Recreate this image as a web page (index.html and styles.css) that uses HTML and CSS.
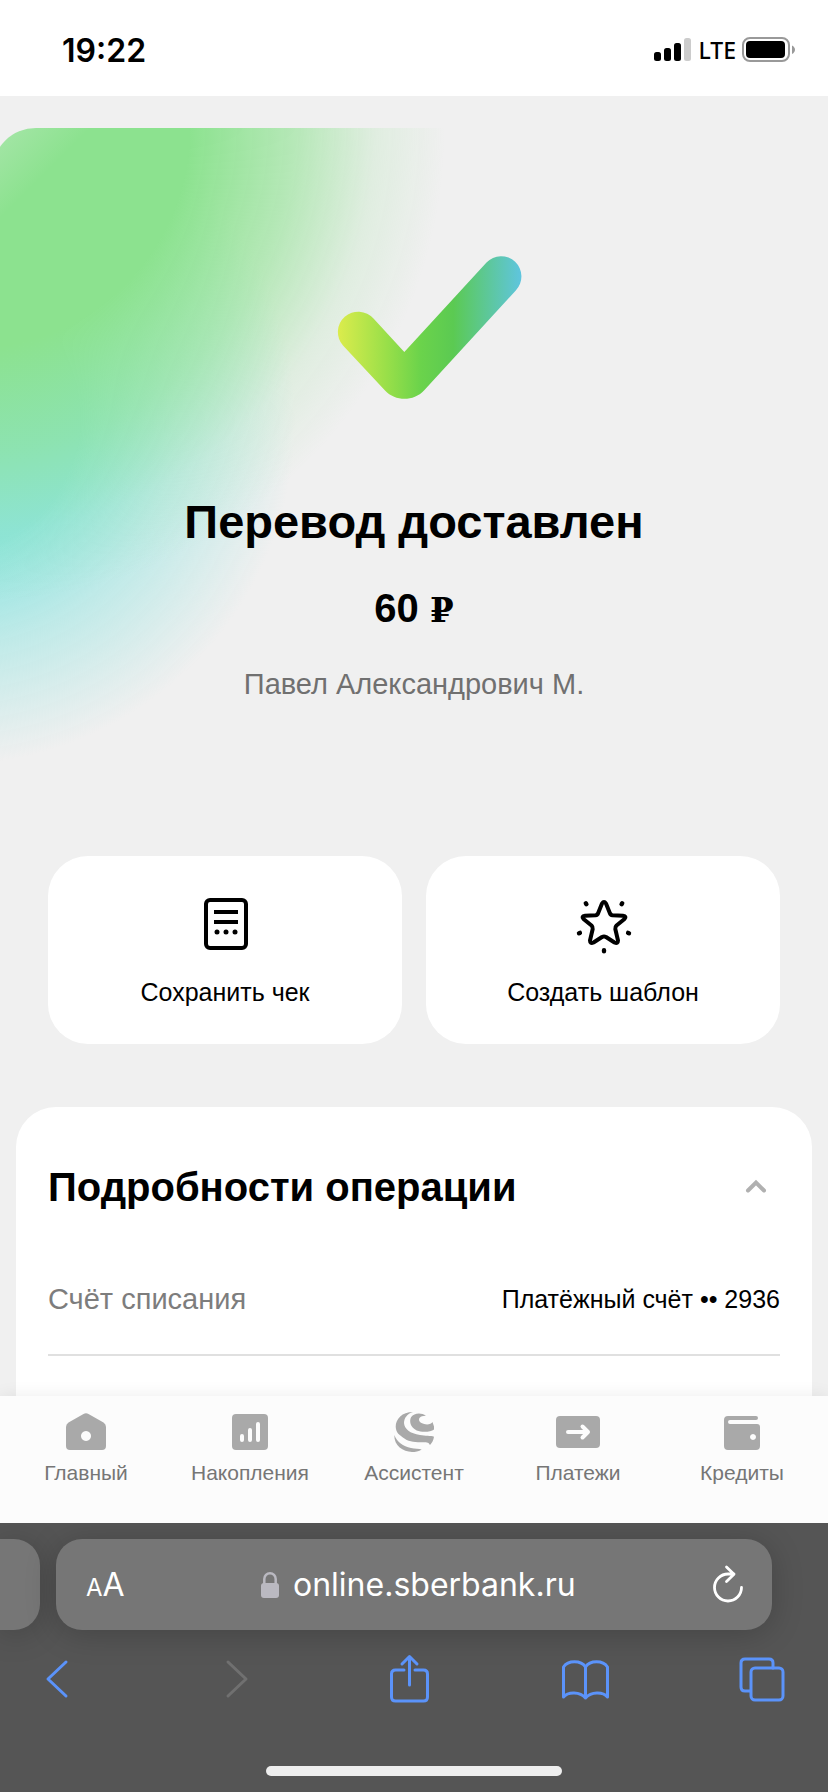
FILE: index.html
```html
<!DOCTYPE html>
<html lang="ru">
<head>
<meta charset="utf-8">
<meta name="viewport" content="width=device-width, initial-scale=1">
<title>Перевод доставлен</title>
<link rel="stylesheet" href="styles.css">
</head>
<body>
<header class="status">
  <time class="status-time">19:22</time>
  <div class="status-right">
    <svg width="38" height="24" viewBox="0 0 38 24" aria-hidden="true">
      <rect x="0" y="14" width="7" height="9" rx="2.5"/>
      <rect x="10" y="10" width="7" height="13" rx="2.5"/>
      <rect x="20" y="5" width="7" height="18" rx="2.5"/>
      <rect x="30" y="0" width="7" height="23" rx="2.5" fill="#ccc"/>
    </svg>
    <span class="status-net">LTE</span>
    <svg width="53" height="26" viewBox="0 0 53 26" aria-hidden="true">
      <rect x="1" y="1" width="46" height="23" rx="7" fill="none" stroke="#999" stroke-width="2"/>
      <rect x="4" y="4" width="39" height="17" rx="4"/>
      <path d="M50 8.500c4 2 4 6.500 0 8.500z" fill="#999"/>
    </svg>
  </div>
</header>

<main class="page">
  <section class="hero">
    <svg class="hero-check" width="216" height="144" viewBox="306 256 216 144" aria-hidden="true">
      <defs>
        <linearGradient id="check" gradientUnits="userSpaceOnUse" x1="338" y1="0" x2="521" y2="0">
          <stop offset="0" stop-color="#dbec4c"/>
          <stop offset=".27" stop-color="#98df49"/>
          <stop offset=".45" stop-color="#6bd34b"/>
          <stop offset=".63" stop-color="#5bca52"/>
          <stop offset="1" stop-color="#5fc5de"/>
        </linearGradient>
      </defs>
      <path fill="url(#check)" d="M343 345.500A20 20 0 0 1 373.500 318.500L404.300 352L486.500 262.500A20 20 0 0 1 515.800 290.500L424 390.500C413.500 401.600 395.500 401.600 385 390.500Z"/>
    </svg>
    <h1 class="hero-title">Перевод доставлен</h1>
    <p class="hero-sum">60 <span class="ruble">₽</span></p>
    <p class="hero-name">Павел Александрович М.</p>
  </section>

  <div class="actions">
    <button class="action" type="button">
      <svg width="56" height="56" viewBox="0 0 56 56" aria-hidden="true">
        <rect x="9" y="4" width="40" height="48" rx="4" fill="none" stroke="#000" stroke-width="4"/>
        <path d="M17 16h24M17 26h24" stroke="#000" stroke-width="4"/>
        <circle cx="20" cy="36" r="2.500"/><circle cx="29" cy="36" r="2.500"/><circle cx="38" cy="36" r="2.500"/>
      </svg>
      <span>Сохранить чек</span>
    </button>
    <button class="action" type="button">
      <svg width="56" height="56" viewBox="-1 0 56 56" fill="none" stroke="#000" stroke-linecap="round" stroke-linejoin="round" aria-hidden="true">
        <path stroke-width="4" d="M26 7.500Q28 4.500 30 7.500L33.800 17Q34.500 19 36.500 19.200L47 19.800Q51 20.200 48.500 23L40.500 29.500Q39 31 39.300 33L42 44.500Q42 48 38.500 46.500L30 41Q28 40 26 41L17.500 46.500Q14 48 14 44.500L16.700 33Q17 31 15.500 29.500L7.500 23Q5 20.200 9 19.800L19.500 19.200Q21.500 19 22.200 17Z"/>
        <path stroke-width="4.400" d="M9.800 7.300l.6 .9M46.200 7.300l-.6 .9M3 37.300l.9-.4M53 37.300l-.9-.4M28 54.300v.9"/>
      </svg>
      <span>Создать шаблон</span>
    </button>
  </div>

  <section class="details">
    <div class="details-head">
      <h2 class="details-title">Подробности операции</h2>
      <button class="details-toggle" type="button" aria-label="Свернуть">
        <svg width="24" height="16" viewBox="0 0 24 16" fill="none" stroke="#b0b0b0" stroke-width="4" aria-hidden="true"><path d="M4 11.500L12 3.500L20 11.500" stroke-linecap="round"/></svg>
      </button>
    </div>
    <dl class="details-row">
      <dt>Счёт списания</dt>
      <dd>Платёжный счёт •• 2936</dd>
    </dl>
  </section>
</main>

<nav class="tabs">
  <a class="tab" href="#main">
    <svg width="44" height="40" viewBox="0 0 44 40" aria-hidden="true"><path fill-rule="evenodd" d="M19.500 2Q22 .3 24.500 2L39.500 10.600Q42 12.300 42 15V34Q42 38 38 38H6Q2 38 2 34V15Q2 12.300 4.500 10.600ZM22 19a5 5 0 1 0 .01 0Z"/></svg>
    <span>Главный</span>
  </a>
  <a class="tab" href="#savings">
    <svg width="44" height="40" viewBox="0 0 44 40" aria-hidden="true"><rect x="4" y="2" width="36" height="36" rx="4"/><path d="M14 24v4M22 18v10M30 12v16" stroke="#fcfcfc" stroke-width="4" stroke-linecap="round"/></svg>
    <span>Накопления</span>
  </a>
  <a class="tab" href="#assistant">
    <svg width="44" height="40" viewBox="-2 0 44 40" aria-hidden="true">
      <path d="M19 0C8 0 1.700 7 1.700 14.700C2 20 4.500 22 7 24C12 28.500 17 30 24 30.200C29 30.300 33 30 34.500 31L36 33C38 31 39.500 28 40 24.700C37 23.500 31 24 26 23C16 21.500 10.500 17 10 11C10 6 13 2 19 0Z"/>
      <path d="M32 3.700C27 .2 20 1 17.200 5C15 9 16 15 22.700 18.500C29 21 37 19.700 40 17.500V14.500L38.500 10C37 13 31 13 27.500 11C23.800 9 24.500 5.500 28 4.300C29.500 3.700 31 3.600 32 3.700Z"/>
      <path d="M.3 23C3 30 9 34.500 17 36C21 36.800 25 36.500 27.700 37.500C25 39.500 21 40 18 40C9 39.500 0 34 .3 23Z"/>
    </svg>
    <span>Ассистент</span>
  </a>
  <a class="tab" href="#payments">
    <svg width="44" height="40" viewBox="0 0 44 40" aria-hidden="true"><rect x="0" y="4" width="44" height="32" rx="4"/><path d="M12 20h20M26.500 14.500L32 20L26.500 25.500" fill="none" stroke="#fcfcfc" stroke-width="4" stroke-linecap="round" stroke-linejoin="round"/></svg>
    <span>Платежи</span>
  </a>
  <a class="tab" href="#credits">
    <svg width="44" height="40" viewBox="0 0 44 40" aria-hidden="true"><path fill-rule="evenodd" d="M8 4H36a2 2 0 0 1 0 4H10a2 2 0 0 0 0 4H37Q40 12 40 15V34Q40 38 36 38H8Q4 38 4 34V8Q4 4 8 4ZM33 22a3 3 0 1 0 .01 0Z"/></svg>
    <span>Кредиты</span>
  </a>
</nav>

<footer class="browser">
  <div class="address-row">
    <div class="address-prev"></div>
    <div class="address">
      <button class="text-size" type="button" aria-label="Размер текста"><small>A</small>A</button>
      <button class="url" type="button">
        <svg width="18" height="28" viewBox="0 0 18 28" aria-hidden="true"><rect x="0" y="12" width="18" height="15" rx="3" fill="#bab9c1"/><path d="M3.300 13V8a5.700 5.700 0 0 1 11.400 0v5" fill="none" stroke="#bab9c1" stroke-width="2.500"/></svg>
        <span>online.sberbank.ru</span>
      </button>
      <button class="reload" type="button" aria-label="Обновить">
        <svg width="32" height="40" viewBox="0 0 32 40" fill="none" stroke="#fff" stroke-width="2.800" stroke-linecap="round" stroke-linejoin="round" aria-hidden="true"><path d="M29.500 22.500A13.500 13.500 0 1 1 16 9H22M14.500 2L22 9.300L14.500 16.500"/></svg>
      </button>
    </div>
  </div>
  <div class="toolbar">
    <button class="tool" type="button" aria-label="Назад"><svg width="48" height="48" viewBox="0 0 48 48" aria-hidden="true"><path d="M33 7L15 24L33 41"/></svg></button>
    <button class="tool" type="button" aria-label="Вперёд" disabled><svg width="48" height="48" viewBox="0 0 48 48" aria-hidden="true"><path d="M19 7L37 24L19 41"/></svg></button>
    <button class="tool" type="button" aria-label="Поделиться"><svg width="48" height="48" viewBox="0 0 48 48" aria-hidden="true"><path d="M19 15H10.500Q6.500 15 6.500 19V42Q6.500 46 10.500 46H38.500Q42.500 46 42.500 42V19Q42.500 15 38.500 15H30M24.500 30V2M17 9L24.500 1.500L32 9"/></svg></button>
    <button class="tool" type="button" aria-label="Закладки"><svg width="48" height="48" viewBox="0 0 48 48" aria-hidden="true"><path d="M24.500 12C20 5 7 5 2.500 12V42C7 36.500 19 36.500 24.500 43C30 36.500 42 36.500 46.500 42V12C42 5 29 5 24.500 12ZV43"/></svg></button>
    <button class="tool" type="button" aria-label="Вкладки"><svg width="48" height="48" viewBox="0 0 48 48" aria-hidden="true"><path d="M13 36H8Q4 36 4 32V8Q4 4 8 4H32Q36 4 36 8V13"/><rect x="14" y="13" width="32" height="32" rx="4"/></svg></button>
  </div>
  <div class="home-bar"></div>
</footer>
</body>
</html>
```
FILE: styles.css
```css
* {
  box-sizing: border-box;
}

body {
  margin: 0;
  min-height: 100vh;
  display: flex;
  flex-direction: column;
  background: #f0f0f0;
  color: #000;
  font-family: "Liberation Sans", Arial, sans-serif;
}

button {
  margin: 0;
  padding: 0;
  border: 0;
  background: none;
  color: inherit;
  font: inherit;
}

svg {
  display: block;
  flex: none;
  overflow: visible;
}

h1, h2, p, dl, dd {
  margin: 0;
}

/* Phone status bar */
.status {
  display: flex;
  align-items: center;
  justify-content: space-between;
  height: 96px;
  padding: 4px 33px 0 62px;
  background: #fff;
  font-family: Inter, sans-serif;
}

.status-time {
  font-size: 32px;
  font-weight: 600;
}

.status-right {
  display: flex;
  align-items: center;
  gap: 6px;
}

.status-net {
  font-family: "Noto Sans", sans-serif;
  font-size: 23px;
  font-weight: 500;
}

/* Page */
.page {
  position: relative;
  flex: 1;
  display: flex;
  flex-direction: column;
  overflow: hidden;
}

.page::before {
  content: "";
  position: absolute;
  top: 32px;
  left: -8px;
  width: 520px;
  height: 660px;
  border-top-left-radius: 44px;
  background:
    linear-gradient(135deg, rgba(240, 240, 240, .28), rgba(240, 240, 240, 0) 70px),
    radial-gradient(circle at -22px 0, rgba(140, 226, 143, 1) 220px, rgba(140, 226, 143, .58) 325px, rgba(140, 226, 143, .16) 405px, rgba(140, 226, 143, 0) 475px),
    radial-gradient(circle at -42px 292px, rgba(142, 228, 224, 1) 130px, rgba(142, 228, 224, .5) 225px, rgba(142, 228, 224, 0) 345px);
}

.hero {
  position: relative;
  display: flex;
  flex-direction: column;
  align-items: center;
  padding: 160px 24px 152px;
  text-align: center;
}

.hero-title {
  margin-top: 94px;
  font-size: 47px;
  line-height: 56px;
}

.hero-sum {
  margin-top: 34px;
  font-size: 40px;
  line-height: 48px;
  font-weight: 700;
}

.ruble {
  font-family: "DejaVu Serif", serif;
  font-size: 34px;
  line-height: 32px;
}

.hero-name {
  margin-top: 32px;
  color: #707070;
  font-size: 29px;
  line-height: 40px;
}

.actions {
  position: relative;
  display: grid;
  grid-template-columns: 1fr 1fr;
  gap: 24px;
  padding: 0 48px;
}

.action {
  display: flex;
  flex-direction: column;
  align-items: center;
  gap: 24px;
  padding: 40px 16px 36px;
  border-radius: 40px;
  background: #fff;
  font-size: 25px;
  line-height: 32px;
}

.details {
  position: relative;
  flex: 1;
  margin: 63px 16px 0;
  padding: 56px 32px 0;
  border-radius: 40px 40px 0 0;
  background: #fff;
}

.details-head {
  display: flex;
  align-items: center;
  justify-content: space-between;
}

.details-title {
  font-size: 40px;
  line-height: 48px;
}

.details-toggle {
  padding: 12px;
}

.details-row {
  display: flex;
  align-items: center;
  justify-content: space-between;
  margin-top: 68px;
  padding-bottom: 35px;
  border-bottom: 2px solid #e0e0e0;
  line-height: 40px;
}

.details-row dt {
  color: #7d7d7d;
  font-size: 29px;
}

.details-row dd {
  font-size: 25px;
}

/* Bank navigation */
.tabs {
  position: relative;
  display: grid;
  grid-template-columns: repeat(5, 1fr);
  height: 127px;
  padding: 16px 4px 0;
  background: #fcfcfc;
  box-shadow: 0 0 16px rgba(0, 0, 0, .08);
}

.tab {
  display: flex;
  flex-direction: column;
  align-items: center;
  gap: 8px;
  color: #767676;
  font-size: 21px;
  line-height: 26px;
  text-decoration: none;
}

.tab svg {
  fill: #a9a9a9;
}

/* Browser controls */
.browser {
  position: relative;
  height: 269px;
  padding-top: 16px;
  overflow: hidden;
  background: #555;
}

.address-row {
  display: flex;
  gap: 16px;
  padding-right: 56px;
}

.address-prev,
.address {
  height: 91px;
  background: #767676;
  box-shadow: 0 4px 32px rgba(0, 0, 0, .2);
}

.address-prev {
  width: 40px;
  border-radius: 0 26px 26px 0;
}

.address {
  flex: 1;
  display: flex;
  align-items: center;
  justify-content: space-between;
  padding: 0 28px 0 30px;
  border-radius: 26px;
  color: #fff;
  font-family: Inter, sans-serif;
}

.text-size {
  font-size: 32px;
}

.text-size small {
  font-size: 24px;
}

.url {
  display: flex;
  align-items: center;
  gap: 14px;
  font-size: 32px;
}

.toolbar {
  display: flex;
  justify-content: space-between;
  padding: 25px 43px 0 33px;
}

.tool {
  color: #5b93fa;
}

.tool:disabled {
  color: #707070;
}

.tool svg {
  fill: none;
  stroke: currentColor;
  stroke-width: 3;
  stroke-linecap: round;
  stroke-linejoin: round;
}

.home-bar {
  width: 296px;
  height: 10px;
  margin: 63px auto 0;
  border-radius: 5px;
  background: #eee;
}
```
